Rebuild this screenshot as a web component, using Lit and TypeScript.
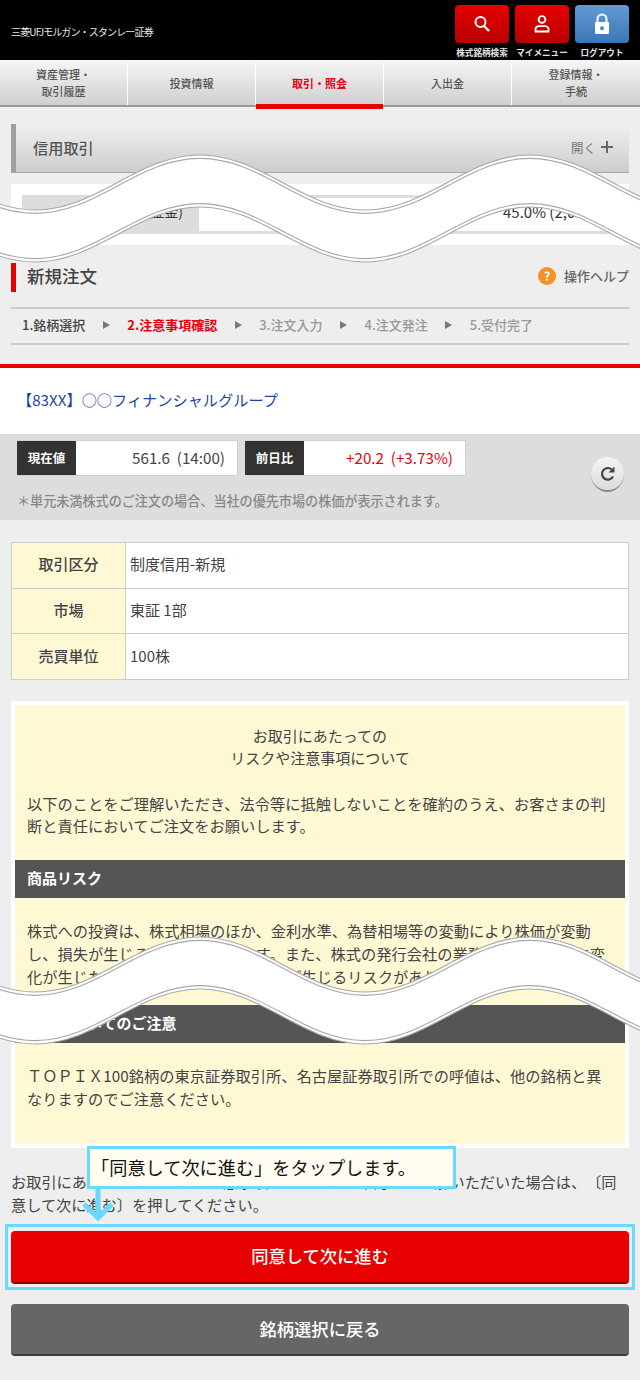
import { LitElement, html, css, svg } from "lit";
import { customElement } from "lit/decorators.js";

function crest(shift: number) {
  // one smooth wave built from half periods of 165px
  const a = 3 + shift;
  const b = 58 + shift;
  let d = `M-130 ${a}`;
  const xs = [-130, 35, 200, 365, 530, 695];
  for (let i = 0; i < xs.length - 1; i++) {
    const x = xs[i];
    const to = i % 2 === 0 ? b : a;
    const from = i % 2 === 0 ? a : b;
    d += ` C${x + 62} ${from} ${x + 103} ${to} ${x + 165} ${to}`;
  }
  return d;
}

function bandPath() {
  // upper edge left to right, then lower edge right to left
  const a = 3;
  const b = 58;
  const s = 52;
  let d = crest(0);
  d += ` L695 ${b + s}`;
  const xs = [695, 530, 365, 200, 35];
  for (let i = 0; i < xs.length; i++) {
    const x = xs[i];
    const from = i % 2 === 0 ? b + s : a + s;
    const to = i % 2 === 0 ? a + s : b + s;
    d += ` C${x - 62} ${from} ${x - 103} ${to} ${x - 165} ${to}`;
  }
  return d + " Z";
}

const waveSvg = (cls: string) => html`<svg class="wave ${cls}" viewBox="0 0 640 116" width="640" height="116">
  ${svg`<path d="${bandPath()}" fill="#fff" stroke="none"></path>
  <path d="${crest(0)}" fill="none" stroke="#a8a8a8" stroke-width="1.1"></path>
  <path d="${crest(3.4)}" fill="none" stroke="#a8a8a8" stroke-width="1.1"></path>
  <path d="${crest(48.6)}" fill="none" stroke="#a8a8a8" stroke-width="1.1"></path>
  <path d="${crest(52)}" fill="none" stroke="#a8a8a8" stroke-width="1.1"></path>`}
</svg>`;

@customElement("app-root")
export class AppRoot extends LitElement {
  static styles = css`
    :host {
      display: block;
      width: 640px;
      font-family: "Noto Sans CJK JP", "Noto Sans", sans-serif;
      color: #444;
      text-spacing-trim: space-all;
    }
    * { box-sizing: border-box; }
    .page {
      position: relative;
      width: 640px;
      height: 1380px;
      background: #eee;
      overflow: hidden;
    }
    .header {
      height: 60px;
      background: #000;
      display: flex;
      justify-content: space-between;
      padding: 5px 11px 0 11px;
    }
    .logo {
      color: #e8e8e8;
      font-size: 10px;
      line-height: 14px;
      margin-top: 20px;
      letter-spacing: -0.85px;
      white-space: nowrap;
    }
    .tools { display: flex; gap: 6px; }
    .tool {
      width: 54px;
      display: flex;
      flex-direction: column;
      align-items: center;
    }
    .tool-btn {
      width: 54px;
      height: 38px;
      border-radius: 4px;
      display: flex;
      align-items: center;
      justify-content: center;
      background: linear-gradient(#e60000, #b80000);
    }
    .tool-btn.blue { background: linear-gradient(#6399d3, #3a78b6); }
    .tool-label {
      color: #e4e4e4;
      font-size: 8.6px;
      line-height: 12px;
      margin-top: 3px;
      font-weight: 700;
      white-space: nowrap;
    }
    .nav {
      position: relative;
      height: 47px;
      display: grid;
      grid-template-columns: repeat(5, 128px);
      background: linear-gradient(#f6f6f6, #cfcfcf);
      border-bottom: 2px solid #9a9a9a;
      padding-top: 2px;
    }
    .nav-item {
      display: flex;
      align-items: center;
      justify-content: center;
      text-align: center;
      font-size: 11px;
      line-height: 17px;
      color: #555;
      font-weight: 500;
      border-right: 1px solid #fff;
      height: 43px;
      padding-bottom: 1px;
    }
    .nav-item:last-child { border-right: none; }
    .nav-item.active { color: #e60012; font-weight: 700; position: relative; }
    .nav-item.active::after {
      content: "";
      position: absolute;
      left: 0;
      right: 0;
      top: 42px;
      height: 5px;
      background: #e60000;
    }
    .accordion {
      margin: 17px 11px 0;
      height: 49px;
      border-left: 5px solid #a0a0a0;
      border-bottom: 1px solid #a8a8a8;
      background: linear-gradient(#f0f0f0, #cdcdcd);
      display: flex;
      align-items: center;
      justify-content: space-between;
      padding: 0 16px 2px 17px;
    }
    .accordion-title { font-size: 15.2px; color: #555; font-weight: 500; }
    .accordion-open {
      font-size: 12.5px;
      color: #777;
      display: flex;
      align-items: center;
      gap: 5px;
    }
    .panel {
      margin: 11px 11px 0;
      height: 61px;
      background: #fff;
      padding: 11px;
    }
    .panel-row {
      display: grid;
      grid-template-columns: 177px 1fr;
      height: 39px;
      background: #ddd;
      border-top: 3px solid #ddd;
      border-bottom: 3px solid #ddd;
      font-size: 14px;
      color: #333;
    }
    .panel-label {
      display: flex;
      align-items: center;
      justify-content: flex-end;
      padding: 0 16px 7px 0;
      white-space: nowrap;
    }
    .panel-value {
      background: #fff;
      display: flex;
      align-items: center;
      padding: 0 0 7px 304px;
      font-size: 15px;
      white-space: nowrap;
    }
    .title-row {
      margin: 18px 11px 0;
      height: 29px;
      border-left: 5px solid #e60000;
      display: flex;
      align-items: center;
      justify-content: space-between;
      padding: 0 0 4px 11px;
    }
    .title { font-size: 17.5px; color: #444; font-weight: 500; }
    .help { display: flex; align-items: center; gap: 8px; font-size: 13px; color: #666; font-weight: 500; }
    .help-dot {
      width: 18px;
      height: 18px;
      border-radius: 50%;
      background: #f39222;
      color: #fff;
      font-size: 12px;
      font-weight: 700;
      display: flex;
      align-items: center;
      justify-content: center;
    }
    .steps {
      margin: 15px 11px 0;
      height: 38px;
      border-top: 2px solid #ccc;
      border-bottom: 2px solid #ccc;
      display: flex;
      align-items: center;
      gap: 17.5px;
      padding: 0 0 3px 11px;
      font-size: 13px;
      color: #999;
      font-weight: 500;
    }
    .step-done { color: #444; }
    .step-now { color: #e60012; font-weight: 700; }
    .tri {
      width: 0;
      height: 0;
      border-left: 7px solid #778;
      border-top: 4px solid transparent;
      border-bottom: 4px solid transparent;
    }
    .name-block {
      margin-top: 19px;
      border-top: 4px solid #e60000;
      height: 70px;
      background: #fff;
      display: flex;
      align-items: center;
      padding: 0 0 5px 17px;
      font-size: 15.2px;
      color: #1f45a3;
      font-weight: 400;
    }
    .quote {
      height: 86px;
      background: #ddd;
      display: flex;
      justify-content: space-between;
      padding: 6px 16px 0 17px;
    }
    .boxes { display: flex; gap: 7px; }
    .box {
      height: 36px;
      background: #fff;
      border: 1px solid #d0d0d0;
      border-left: none;
      display: grid;
      grid-template-columns: 59px 1fr;
    }
    .box-a { width: 221px; }
    .box-b { width: 221px; }
    .box-label {
      background: #333;
      color: #fff;
      font-size: 12.5px;
      font-weight: 700;
      display: flex;
      align-items: center;
      justify-content: center;
      padding-bottom: 2px;
    }
    .box-value {
      display: flex;
      align-items: center;
      justify-content: flex-end;
      padding: 0 12px 2px 0;
      font-size: 15.2px;
      color: #444;
      white-space: pre;
    }
    .box-value.up { color: #e60012; }
    .quote-note {
      margin-top: 16px;
      font-size: 13.1px;
      line-height: 18px;
      color: #888;
      font-weight: 500;
      white-space: nowrap;
    }
    .reload {
      width: 33px;
      height: 35px;
      margin-top: 17px;
      border-radius: 50%;
      background: linear-gradient(#f4f4f4, #dcdcdc);
      border-bottom: 2px solid #8a8a8a;
      display: flex;
      align-items: center;
      justify-content: center;
    }
    .spec {
      margin: 22px 11px 0;
      height: 138px;
      display: grid;
      grid-template-columns: 114px 1fr;
      grid-auto-rows: 1fr;
      border: 1px solid #ccc;
      border-bottom: none;
      font-size: 15px;
    }
    .spec-k, .spec-v {
      display: flex;
      align-items: center;
      border-bottom: 1px solid #ccc;
      padding-bottom: 3px;
    }
    .spec-k {
      background: #fff8d5;
      justify-content: center;
      border-right: 1px solid #ccc;
      font-weight: 500;
    }
    .spec-v { background: #fff; padding-left: 4px; font-weight: 400; }
    .notice {
      margin: 21px 11px 0;
      border: 4px solid #fff;
      background: #fff8d5;
      padding: 20px 0 34px;
      font-size: 15.25px;
      line-height: 22px;
      color: #444;
    }
    .notice-head { text-align: center; font-size: 15px; font-weight: 400; }
    .notice p { margin: 0; padding: 0 12px; }
    .p1 { margin-top: 23px !important; }
    .p2 { margin-top: 21px !important; line-height: 23px; }
    .p3 { margin-top: 21px !important; line-height: 23px; }
    .bar {
      height: 38px;
      background: #555;
      color: #fff;
      font-weight: 700;
      font-size: 15px;
      display: flex;
      align-items: center;
      padding: 0 0 2px 12px;
    }
    .bar1 { margin-top: 24px; }
    .bar2 { margin-top: 17px; }
    .agree {
      margin: 22px 11px 0;
      font-size: 15.2px;
      line-height: 23px;
      color: #444;
    }
    .btn {
      margin: 15px 11px 0;
      height: 53px;
      border-radius: 4px;
      color: #fff;
      font-size: 17.3px;
      font-weight: 500;
      display: flex;
      align-items: center;
      justify-content: center;
      padding-bottom: 2px;
    }
    .btn-red { background: #e60000; border-bottom: 2px solid #8c0000; }
    .btn-gray { background: #666; border-bottom: 2px solid #3c3c3c; margin-top: 20px; height: 52px; }
    .wave { position: absolute; left: 0; display: block; }
    .wave-a { top: 152px; }
    .wave-b { top: 934px; }
    .callout {
      position: absolute;
      left: 87px;
      top: 1146px;
      width: 369px;
      height: 43px;
      border: 3px solid #6bd9ff;
      background: #fffdf2;
      color: #111;
      font-size: 18.2px;
      display: flex;
      align-items: center;
      padding: 0 0 1px 1px;
      white-space: nowrap;
    }
    .arrow { position: absolute; left: 82px; top: 1189px; display: block; }
    .focus {
      position: absolute;
      left: 5px;
      top: 1224px;
      width: 630px;
      height: 66px;
      border: 3px solid #6bd9ff;
    }
  `;

  render() {
    return html`<div class="page">
      <header class="header">
        <div class="logo">三菱UFJモルガン・スタンレー証券</div>
        <div class="tools">
          <div class="tool">
            <div class="tool-btn">
              <svg width="20" height="20" viewBox="0 0 20 20" fill="none" stroke="#fff"><circle cx="8.5" cy="8" r="5" stroke-width="2"></circle><path d="M12 12l5 5" stroke-width="2.4"></path></svg>
            </div>
            <div class="tool-label">株式銘柄検索</div>
          </div>
          <div class="tool">
            <div class="tool-btn">
              <svg width="20" height="20" viewBox="0 0 20 20" fill="none" stroke="#fff" stroke-width="1.9"><circle cx="10" cy="5.5" r="3.4"></circle><path d="M3.6 17.5c-1-3.4 1-5.4 3.4-5.4h6c2.4 0 4.4 2 3.4 5.4z"></path></svg>
            </div>
            <div class="tool-label">マイメニュー</div>
          </div>
          <div class="tool">
            <div class="tool-btn blue">
              <svg width="20" height="24" viewBox="0 0 20 24"><path d="M5.5 11V7a4.5 4.5 0 0 1 9 0v4" fill="none" stroke="#fff" stroke-width="2"></path><path fill-rule="evenodd" d="M4 10h12a1 1 0 0 1 1 1v10a1 1 0 0 1-1 1H4a1 1 0 0 1-1-1V11a1 1 0 0 1 1-1zm6 4.2a2 2 0 1 0 0 4 2 2 0 0 0 0-4z" fill="#fff"></path></svg>
            </div>
            <div class="tool-label">ログアウト</div>
          </div>
        </div>
      </header>
      <nav class="nav">
        <div class="nav-item">資産管理・<br />取引履歴</div>
        <div class="nav-item">投資情報</div>
        <div class="nav-item active">取引・照会</div>
        <div class="nav-item">入出金</div>
        <div class="nav-item">登録情報・<br />手続</div>
      </nav>
      <div class="accordion">
        <div class="accordion-title">信用取引</div>
        <div class="accordion-open">開く
          <svg width="12" height="12" viewBox="0 0 12 12"><path d="M6 0v12M0 6h12" stroke="#666" stroke-width="2"></path></svg>
        </div>
      </div>
      <div class="panel">
        <div class="panel-row">
          <div class="panel-label">維持率(委託保証金)</div>
          <div class="panel-value">45.0% (2,000円)</div>
        </div>
      </div>
      <div class="title-row">
        <div class="title">新規注文</div>
        <div class="help"><span class="help-dot">?</span>操作ヘルプ</div>
      </div>
      <div class="steps">
        <span class="step-done">1.銘柄選択</span><i class="tri"></i>
        <span class="step-now">2.注意事項確認</span><i class="tri"></i>
        <span>3.注文入力</span><i class="tri"></i>
        <span>4.注文発注</span><i class="tri"></i>
        <span>5.受付完了</span>
      </div>
      <div class="name-block">【83XX】○○フィナンシャルグループ</div>
      <section class="quote">
        <div>
          <div class="boxes">
            <div class="box box-a"><div class="box-label">現在値</div><div class="box-value">561.6  (14:00)</div></div>
            <div class="box box-b"><div class="box-label">前日比</div><div class="box-value up">+20.2  (+3.73%)</div></div>
          </div>
          <div class="quote-note">＊単元未満株式のご注文の場合、当社の優先市場の株価が表示されます。</div>
        </div>
        <div class="reload">
          <svg width="18" height="18" viewBox="0 0 18 18" fill="none"><path d="M14 11.5A5.8 5.8 0 1 1 12.6 4.4" stroke="#444" stroke-width="2.2"></path><path d="M15.5 1.6v6h-6z" fill="#444"></path></svg>
        </div>
      </section>
      <section class="spec">
        <div class="spec-k">取引区分</div><div class="spec-v">制度信用-新規</div>
        <div class="spec-k">市場</div><div class="spec-v">東証 1部</div>
        <div class="spec-k">売買単位</div><div class="spec-v">100株</div>
      </section>
      <section class="notice">
        <div class="notice-head">お取引にあたっての<br />リスクや注意事項について</div>
        <p class="p1">以下のことをご理解いただき、法令等に抵触しないことを確約のうえ、お客さまの判断と責任においてご注文をお願いします。</p>
        <div class="bar bar1">商品リスク</div>
        <p class="p2">株式への投資は、株式相場のほか、金利水準、為替相場等の変動により株価が変動し、損失が生じるおそれがあります。また、株式の発行会社の業務や財産の状況に変化が生じた場合、株価が下落し、損失が生じるリスクがあります。</p>
        <div class="bar bar2">呼値についてのご注意</div>
        <p class="p3">ＴＯＰＩＸ100銘柄の東京証券取引所、名古屋証券取引所での呼値は、他の銘柄と異なりますのでご注意ください。</p>
      </section>
      <p class="agree">お取引にあたってのリスクや注意事項について、ご確認・ご理解いただいた場合は、〔同意して次に進む〕を押してください。</p>
      <div class="btn btn-red">同意して次に進む</div>
      <div class="btn btn-gray">銘柄選択に戻る</div>

      ${waveSvg("wave-a")}
      ${waveSvg("wave-b")}
      <div class="callout">「同意して次に進む」をタップします。</div>
      <svg class="arrow" width="34" height="34" viewBox="0 0 34 34" fill="none" stroke="#6bd9ff"><path d="M16 0v28" stroke-width="5"></path><path d="M2 15l14 14 14-14" stroke-width="5"></path></svg>
      <div class="focus"></div>
    </div>`;
  }
}
